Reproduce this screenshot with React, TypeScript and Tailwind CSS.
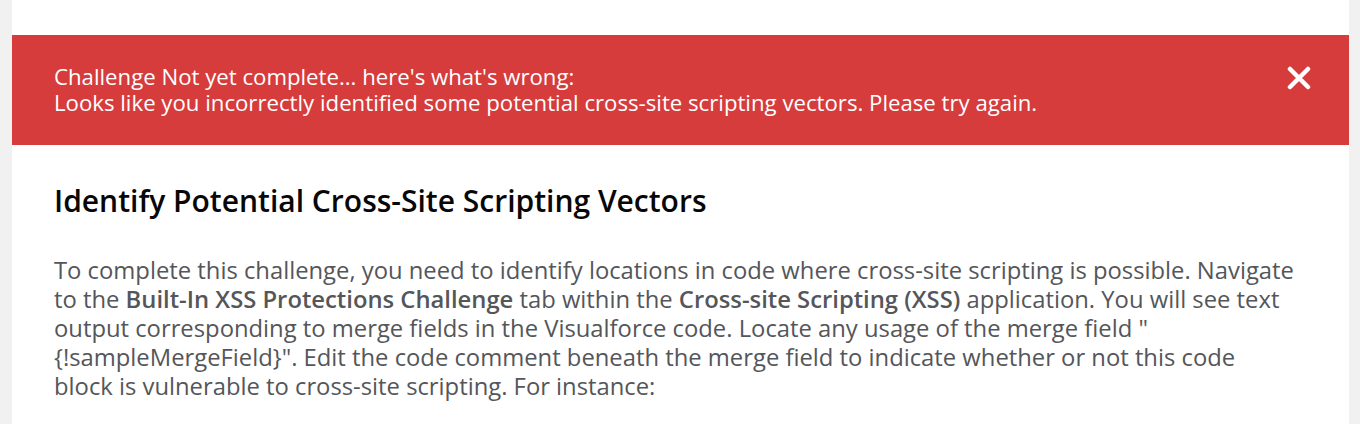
const CloseIcon = () => (
  <svg width="24" height="24" viewBox="0 0 24 24" className="mt-[2px] shrink-0">
    <path d="M3 3L21 21M21 3L3 21" stroke="white" strokeWidth="4.5" strokeLinecap="round" />
  </svg>
);

const App = () => {
  return (
    <div className="flex h-[424px] w-[1360px] bg-[#f1f1f1] font-['Open_Sans',sans-serif]">
      <div className="ml-[12px] w-[1337px] bg-white pt-[35px]">
        <div className="flex h-[110px] items-start justify-between bg-[#d63c3c] pl-[42px] pr-[38px] pt-[29px] text-white">
          <div className="text-[22.2px] leading-[26px] whitespace-nowrap">
            <p>Challenge Not yet complete... here's what's wrong:</p>
            <p>Looks like you incorrectly identified some potential cross-site scripting vectors. Please try again.</p>
          </div>
          <CloseIcon />
        </div>
        <div className="px-[42px] pt-[38px]">
          <h2 className="text-[30px] leading-[36px] font-semibold text-[#080707]">
            Identify Potential Cross-Site Scripting Vectors
          </h2>
          <p className="mt-[37px] text-[23.8px] leading-[29px] text-[#54565a] whitespace-nowrap">
            To complete this challenge, you need to identify locations in code where cross-site scripting is possible. Navigate
            <br />
            to the <b className="font-semibold">Built-In XSS Protections Challenge</b> tab within the <b className="font-semibold">Cross-site Scripting (XSS)</b> application. You will see text
            <br />
            output corresponding to merge fields in the Visualforce code. Locate any usage of the merge field "
            <br />
            {"{!sampleMergeField}"}". Edit the code comment beneath the merge field to indicate whether or not this code
            <br />
            block is vulnerable to cross-site scripting. For instance:
          </p>
        </div>
      </div>
    </div>
  );
};

export default App;
